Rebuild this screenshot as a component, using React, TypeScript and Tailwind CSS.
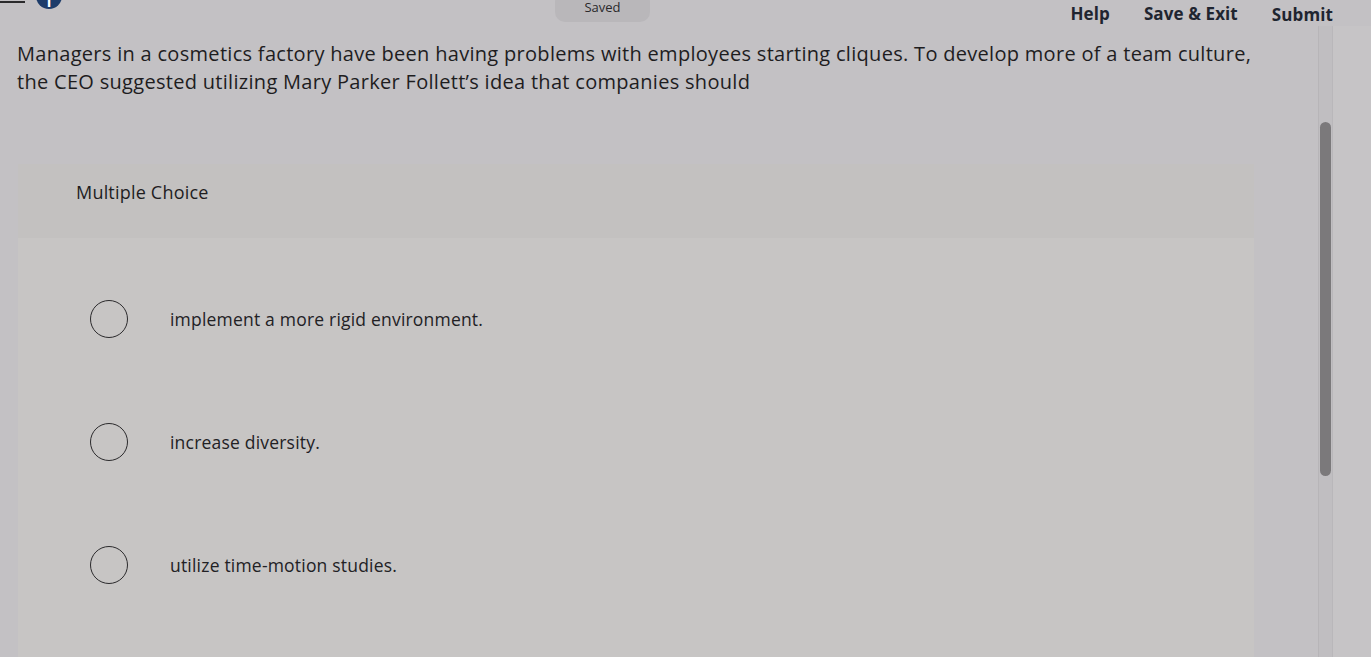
const options = [
  'implement a more rigid environment.',
  'increase diversity.',
  'utilize time-motion studies.',
];

export default function App() {
  return (
    <div
      className="flex h-[657px] w-[1371px] flex-col overflow-hidden bg-[#c3c1c4] text-[#1e1d1f]"
      style={{ fontFamily: '"Open Sans", Lato, sans-serif' }}
    >
      {/* Top bar */}
      <header className="flex h-[26px] shrink-0 items-start">
        <div className="mt-[1px] h-[2px] w-[25px] bg-[#2a2a2c]" />
        <div className="-mt-[17px] ml-[11px] flex h-[26px] w-[26px] items-end justify-center rounded-full bg-[#1d3c6a] pb-[0px] text-[15px] font-bold leading-[16px] text-white">
          i
        </div>
        <div className="-mt-[8px] ml-[493px] flex h-[30px] w-[95px] items-end justify-center rounded-[10px] bg-[#b9b7ba] pb-[7px] text-[13px] leading-[16px] text-[#2a292b]">
          Saved
        </div>
        <nav className="ml-auto mr-[38px] mt-[0px] flex items-center gap-[34px] text-[17px] font-bold tracking-[0.1px] text-[#1f2530]">
          <span>Help</span>
          <span>Save &amp; Exit</span>
          <span className="mt-[2px]">Submit</span>
        </nav>
      </header>

      <div className="flex min-h-0 flex-1">
        {/* Main column */}
        <div className="flex w-[1318px] flex-col">
          {/* Question stem */}
          <p className="mt-[14px] pl-[17px] pr-[56px] text-[20px] leading-[28px] tracking-[0.3px]">
            Managers in a cosmetics factory have been having problems with employees starting cliques. To develop more of a team culture, the CEO suggested utilizing Mary Parker Follett’s idea that companies should
          </p>

          {/* Question card */}
          <section className="ml-[18px] mt-[68px] w-[1236px] flex-1 bg-[#c7c5c4]">
            <div className="h-[74px] bg-[#c3c1c0] pl-[58px] pt-[15px] text-[18px] tracking-[0.2px]">
              Multiple Choice
            </div>
            <div className="flex flex-col pt-[62px]">
              {options.map(o => (
                <label key={o} className="flex h-[123px] items-start">
                  <span className="ml-[72px] h-[38px] w-[38px] rounded-full border-[1.5px] border-[#2b2a2c]" />
                  <span className="ml-[42px] mt-[6px] text-[17.5px] tracking-[0.2px] text-[#222124]">{o}</span>
                </label>
              ))}
            </div>
          </section>
        </div>

        {/* Scrollbar */}
        <div className="flex w-[53px] border-l border-[#b7b5b8]">
          <div className="w-[14px] border-r border-[#b9b7ba] bg-[#c0bec1] pt-[96px]">
            <div className="mx-auto h-[354px] w-[11px] rounded-full bg-[#7b797b]" />
          </div>
          <div className="flex-1 bg-[#c6c4c6]" />
        </div>
      </div>
    </div>
  );
}
